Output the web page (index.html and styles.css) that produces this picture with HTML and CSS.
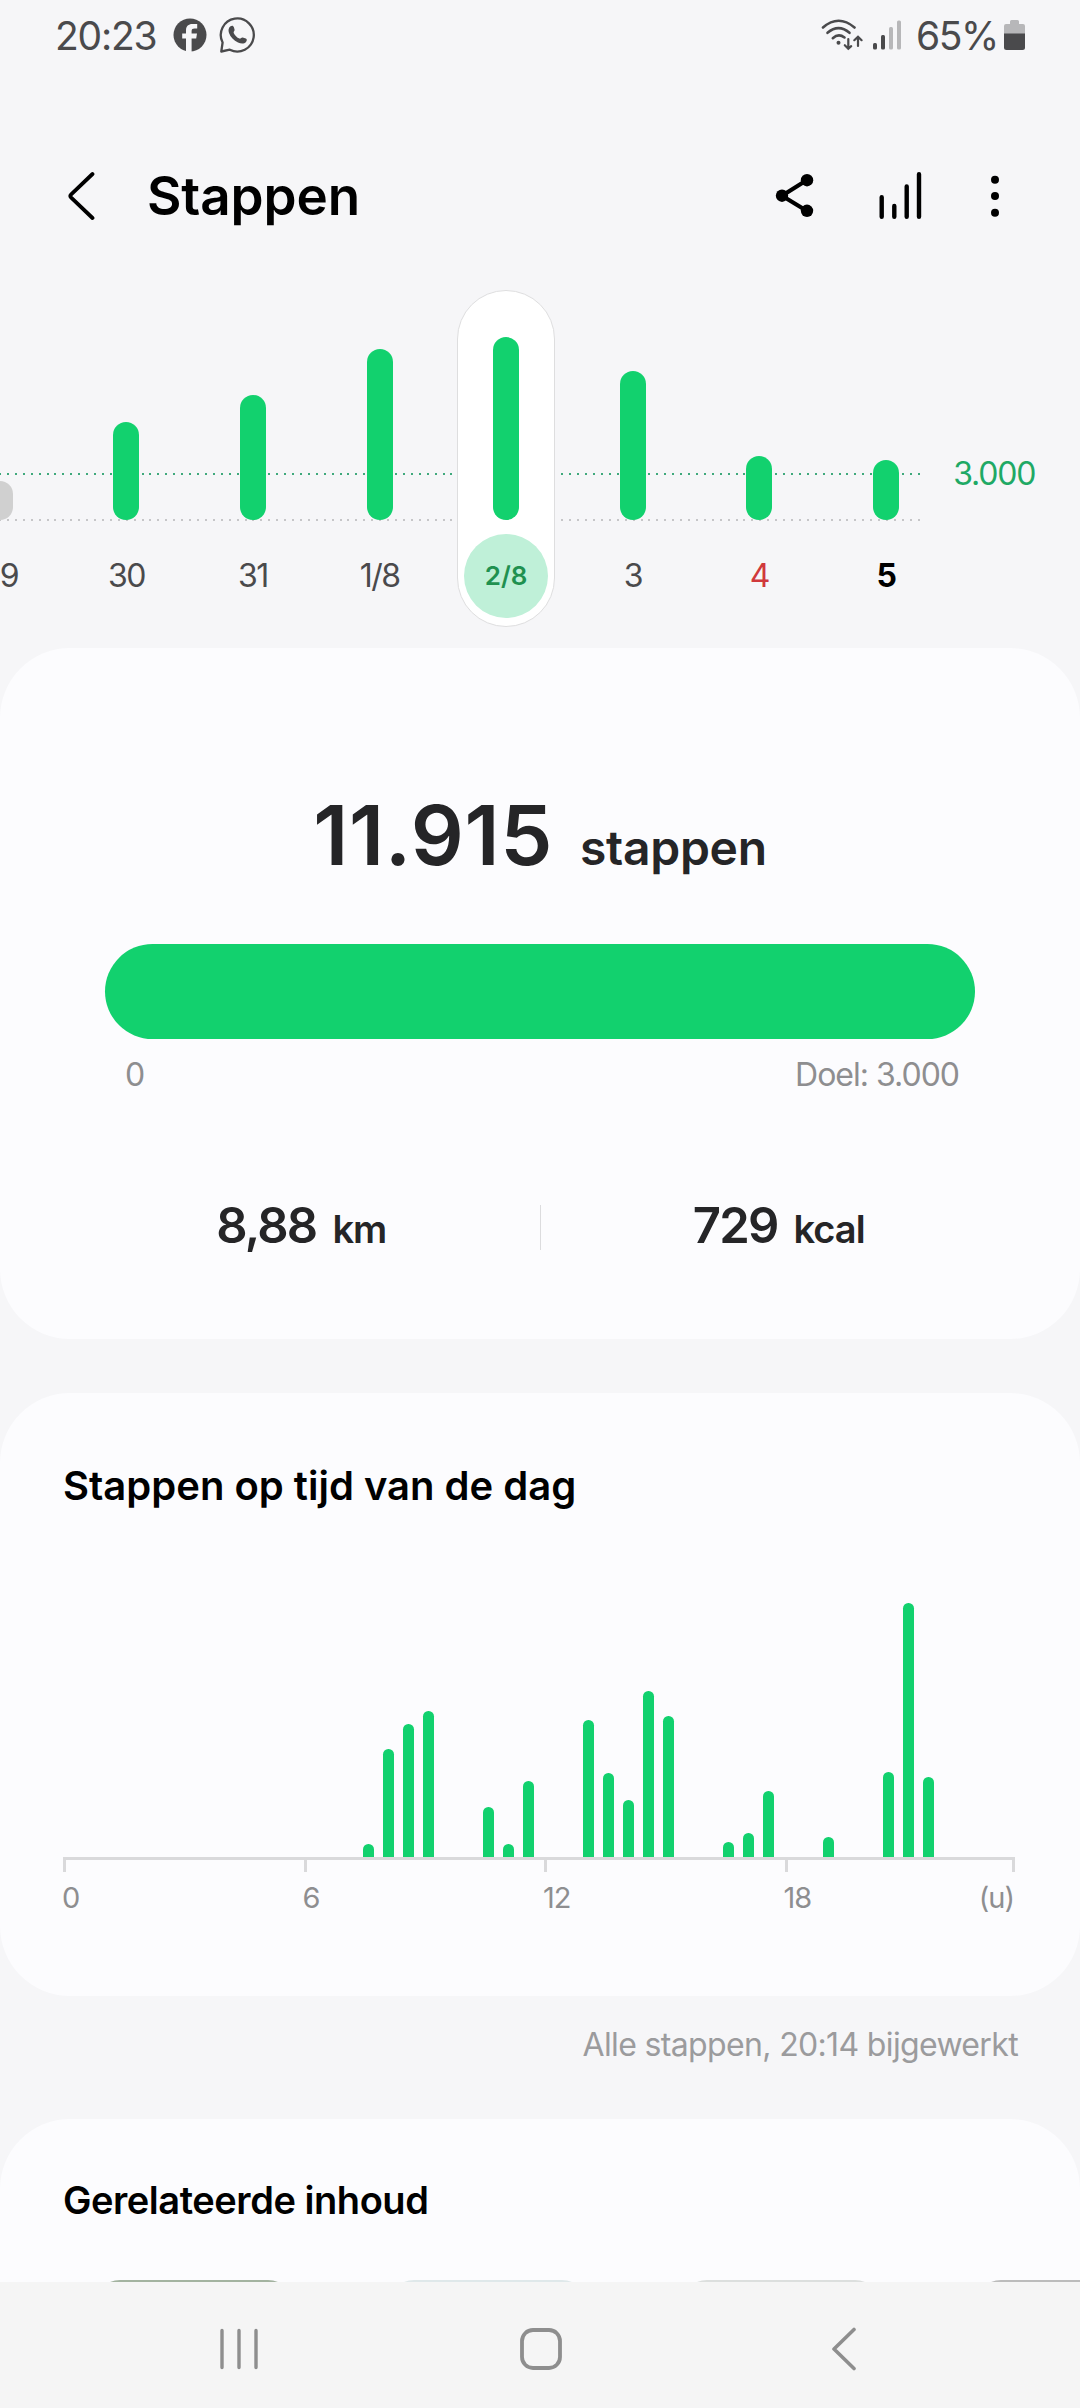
FILE: index.html
```html
<!DOCTYPE html>
<html lang="nl">
<head>
  <meta charset="utf-8">
  <title>Stappen</title>
  <link rel="stylesheet" href="styles.css">
</head>
<body>
  <div class="status-bar">
    <span class="clock">20:23</span>
    <svg class="fb-icon" width="34" height="34" viewBox="0 0 34 34">
      <circle cx="17" cy="17" r="16.5" fill="#4a4a4c"/>
      <path d="M13 34V20.5H9.2v-5H13v-3.2c0-4.2 2.600-6.300 6.300-6.300h4.900v4.400h-2.700c-2 0-2.900.8-2.900 2.500v2.600h5.400l-.8 5h-4.600V34z" fill="#f6f6f8"/>
    </svg>
    <svg class="wa-icon" width="38" height="38" viewBox="0 0 38 38" fill="none">
      <path d="M2.300 35.500L3.600 26.500A16.500 16.500 0 1 1 10.800 33.700Z" stroke="#4a4a4c" stroke-width="2.300" stroke-linejoin="round"/>
      <path d="M11.500 10.300c1.500-1.200 2.900-.7 3.400 1l.7 2.500c.3 1.200-1.400 2-.9 3.100 1.200 2.500 3.200 4.500 5.800 5.700 1.100.5 2-1.500 3.200-1.100l3.100 1.100c1.300.6 1.300 2 .2 3.300-1.900 2.200-5 1.900-8 .5-4.200-2-7.500-5.300-9-9.400-.9-2.600-.6-5.200 1.500-6.700z" fill="#4a4a4c"/>
    </svg>
    <div class="status-right">
      <svg class="wifi-icon" width="44" height="36" viewBox="0 0 44 36" fill="none" stroke="#4a4a4c" stroke-width="2.600" stroke-linecap="round">
        <path d="M3 10.500Q18.500-3 34.500 10.500"/>
        <path d="M7.500 15.800Q18.500 6.600 29.500 15.800"/>
        <path d="M12.800 21.200Q18.500 16 24.500 20.500"/>
        <circle cx="18.500" cy="25.800" r="2" fill="#4a4a4c" stroke="none"/>
        <path d="M28.300 22V31.500M24.800 28.200L28.300 31.700L31.200 29.200" stroke-width="2.200"/>
        <path d="M38 29V20M34.300 23.200L38 19.700L41.600 23.200" stroke-width="2.200"/>
      </svg>
      <svg class="signal-icon" width="28" height="30" viewBox="0 0 28 30">
        <rect x="0" y="23" width="4" height="6.500" rx="1.500" fill="#4a4a4c"/>
        <rect x="8" y="15" width="4" height="14.500" rx="1.500" fill="#4a4a4c"/>
        <rect x="16" y="7" width="4" height="22.500" rx="1.500" fill="#b7b7b9"/>
        <rect x="24" y="0.500" width="4" height="29" rx="1.500" fill="#b7b7b9"/>
      </svg>
      <span class="battery-text">65%</span>
      <svg class="battery-icon" width="21" height="30" viewBox="0 0 21 30">
        <path d="M6 4V1.500Q6 0 7.500 0H13.500Q15 0 15 1.500V4H19Q21 4 21 6V14H0V6Q0 4 2 4Z" fill="#b7b7b9"/>
        <path d="M0 13.500H21V27.500Q21 30 18.500 30H2.500Q0 30 0 27.500Z" fill="#4a4a4c"/>
      </svg>
    </div>
  </div>

  <div class="header">
    <svg class="back-icon" width="30" height="52" viewBox="0 0 30 52" fill="none" stroke="#000" stroke-width="3.800" stroke-linecap="round" stroke-linejoin="round">
      <path d="M25.500 4L4.200 24.300Q2.500 26 4.200 27.700L25.500 48"/>
    </svg>
    <h1>Stappen</h1>
    <div class="header-actions">
      <svg class="share-icon" width="40" height="46" viewBox="0 0 40 46">
        <path d="M32 7L7 22.700L32 38" fill="none" stroke="#000" stroke-width="4.200"/>
        <circle cx="7" cy="22.700" r="6.200"/>
        <circle cx="32" cy="7.200" r="6.200"/>
        <circle cx="32" cy="37.800" r="6.200"/>
      </svg>
      <svg class="chart-icon" width="43" height="48" viewBox="0 0 43 48" fill="none" stroke="#000" stroke-width="4.400" stroke-linecap="round">
        <path d="M2.700 25.200V44.800M15.300 34V44.800M27.700 14.500V44.800M40 2.300V44.800"/>
      </svg>
      <svg class="more-icon" width="10" height="44" viewBox="0 0 10 44">
        <circle cx="5" cy="5.700" r="4"/>
        <circle cx="5" cy="22" r="4"/>
        <circle cx="5" cy="38.700" r="4"/>
      </svg>
    </div>
  </div>

  <div class="week">
    <div class="days">
      <div class="day"><div class="bar missed" style="height: 39px"></div><div class="date">29</div></div>
      <div class="day"><div class="bar" style="height: 98px"></div><div class="date">30</div></div>
      <div class="day"><div class="bar" style="height: 125px"></div><div class="date">31</div></div>
      <div class="day"><div class="bar" style="height: 171px"></div><div class="date">1/8</div></div>
      <div class="day selected"><div class="bar" style="height: 183px"></div><div class="date">2/8</div></div>
      <div class="day"><div class="bar" style="height: 149px"></div><div class="date">3</div></div>
      <div class="day sunday"><div class="bar" style="height: 64px"></div><div class="date">4</div></div>
      <div class="day today"><div class="bar" style="height: 60px"></div><div class="date">5</div></div>
    </div>
    <div class="goal-label">3.000</div>
  </div>

  <div class="card summary">
    <div class="total">
      <span class="total-value">11.915</span>
      <span class="total-unit">stappen</span>
    </div>
    <div class="progress"></div>
    <div class="progress-labels">
      <span>0</span>
      <span>Doel: 3.000</span>
    </div>
    <div class="metrics">
      <div class="metric"><span class="metric-value">8,88</span><span class="metric-unit">km</span></div>
      <div class="divider"></div>
      <div class="metric"><span class="metric-value">729</span><span class="metric-unit">kcal</span></div>
    </div>
  </div>

  <div class="card hours">
    <h2>Stappen op tijd van de dag</h2>
    <!-- One column per half hour -->
    <div class="hour-chart">
      <div class="hour-bar" style="grid-column: 16; height: 13px"></div>
      <div class="hour-bar" style="grid-column: 17; height: 108px"></div>
      <div class="hour-bar" style="grid-column: 18; height: 133px"></div>
      <div class="hour-bar" style="grid-column: 19; height: 146px"></div>
      <div class="hour-bar" style="grid-column: 22; height: 50px"></div>
      <div class="hour-bar" style="grid-column: 23; height: 13px"></div>
      <div class="hour-bar" style="grid-column: 24; height: 76px"></div>
      <div class="hour-bar" style="grid-column: 27; height: 137px"></div>
      <div class="hour-bar" style="grid-column: 28; height: 84px"></div>
      <div class="hour-bar" style="grid-column: 29; height: 57px"></div>
      <div class="hour-bar" style="grid-column: 30; height: 166px"></div>
      <div class="hour-bar" style="grid-column: 31; height: 141px"></div>
      <div class="hour-bar" style="grid-column: 34; height: 15px"></div>
      <div class="hour-bar" style="grid-column: 35; height: 24px"></div>
      <div class="hour-bar" style="grid-column: 36; height: 66px"></div>
      <div class="hour-bar" style="grid-column: 39; height: 20px"></div>
      <div class="hour-bar" style="grid-column: 42; height: 85px"></div>
      <div class="hour-bar" style="grid-column: 43; height: 254px"></div>
      <div class="hour-bar" style="grid-column: 44; height: 80px"></div>
    </div>
    <div class="axis"><i></i><i></i><i></i><i></i></div>
    <div class="axis-labels">
      <span>0</span>
      <span>6</span>
      <span>12</span>
      <span>18</span>
      <span class="axis-unit">(u)</span>
    </div>
  </div>

  <div class="updated">Alle stappen, 20:14 bijgewerkt</div>

  <div class="card related">
    <h2>Gerelateerde inhoud</h2>
    <div class="thumbs">
      <div class="thumb park"></div>
      <div class="thumb sky"></div>
      <div class="thumb light"></div>
      <div class="thumb grey"></div>
    </div>
  </div>

  <div class="nav-bar">
    <svg width="38" height="42" viewBox="0 0 38 42" fill="none" stroke="#8e8e8e" stroke-width="3.400" stroke-linecap="round">
      <path d="M2 2.500V39.500M19 2.500V39.500M36 2.500V39.500"/>
    </svg>
    <svg class="home-icon" width="42" height="42" viewBox="0 0 42 42" fill="none" stroke="#8e8e8e" stroke-width="3.800">
      <rect x="2" y="2" width="38" height="38" rx="11"/>
    </svg>
    <svg width="26" height="44" viewBox="0 0 26 44" fill="none" stroke="#8e8e8e" stroke-width="3.600" stroke-linecap="round" stroke-linejoin="round">
      <path d="M23 2.500L3 22L23 41.500"/>
    </svg>
  </div>
</body>
</html>
```
FILE: styles.css
```css
* {
  box-sizing: border-box;
}

body {
  margin: 0;
  width: 1080px;
  height: 2408px;
  display: flex;
  flex-direction: column;
  overflow: hidden;
  background-color: #f6f6f8;
  font-family: Inter, "Noto Sans", sans-serif;
  color: #000;
}

svg {
  display: block;
  flex: none;
}

h1, h2 {
  margin: 0;
  font-weight: 600;
}

/* Status bar */
.status-bar {
  display: flex;
  align-items: center;
  flex: none;
  height: 70px;
  padding: 0 55px;
  font-size: 39px;
  color: #4a4a4c;
}

.clock {
  width: 118px;
  letter-spacing: -1.2px;
}

.wa-icon {
  margin-left: 12px;
}

.status-right {
  display: flex;
  align-items: center;
  margin-left: auto;
}

.wifi-icon {
  margin-right: 9px;
}

.signal-icon {
  margin-right: 15px;
}

.battery-text {
  width: 88px;
  letter-spacing: -1.5px;
}

/* Header */
.header {
  display: flex;
  align-items: center;
  flex: none;
  height: 220px;
  padding: 32px 80px 0 67px;
}

.header h1 {
  margin-left: 50px;
  font-size: 53px;
  letter-spacing: -0.1px;
}

.header-actions {
  display: flex;
  align-items: center;
  margin-left: auto;
}

.chart-icon {
  margin: 0 68px 0 64px;
}

/* Daily overview */
.week {
  position: relative;
  display: flex;
  flex: none;
  height: 358px;
  overflow: hidden;
}

.week::before,
.week::after {
  content: "";
  position: absolute;
  left: -1px;
  width: 926px;
  height: 2px;
}

.week::before {
  top: 183px;
  background: repeating-linear-gradient(90deg, #3fa97c 0 2px, transparent 2px 7.920px);
}

.week::after {
  top: 229px;
  background: repeating-linear-gradient(90deg, #c6c6c8 0 2px, transparent 2px 7.920px);
}

.days {
  position: relative;
  z-index: 1;
  display: grid;
  grid-template-columns: repeat(8, 126.600px);
  margin-left: -63.500px;
  height: 337px;
}

.day {
  display: flex;
  flex-direction: column;
  align-items: center;
  justify-content: flex-end;
  padding-bottom: 9px;
}

.bar {
  width: 26px;
  border-radius: 13px;
  background-color: #12d16e;
}

.bar.missed {
  background-color: #d0d0d0;
}

.date {
  width: 84px;
  height: 84px;
  margin-top: 14px;
  line-height: 83px;
  text-align: center;
  font-size: 32px;
  letter-spacing: -1.500px;
  color: #4a4a4c;
}

.selected {
  width: 98px;
  justify-self: center;
  padding-bottom: 8px;
  border: 1px solid #dededf;
  border-radius: 49px;
  background-color: #fff;
}

.selected .date {
  border-radius: 50%;
  background-color: #bff0d8;
  color: #1f9150;
  font-size: 26px;
  font-weight: 600;
  letter-spacing: 0;
}

.sunday .date {
  color: #d0393c;
}

.today .date {
  color: #000;
  font-weight: 700;
}

.goal-label {
  margin-left: 4px;
  padding-top: 164px;
  line-height: 40px;
  font-size: 32px;
  letter-spacing: -1.200px;
  color: #1fa965;
}

/* Cards */
.card {
  flex: none;
  border-radius: 70px;
  background-color: #fcfcfe;
}

.card h2 {
  font-size: 40px;
  line-height: 50px;
}

.summary {
  height: 691px;
  padding-top: 137px;
  color: #252527;
}

.total {
  display: flex;
  justify-content: center;
  align-items: baseline;
  font-weight: 600;
}

.total-value {
  font-size: 83px;
  line-height: 100px;
  letter-spacing: 0.600px;
}

.total-unit {
  margin-left: 27px;
  font-size: 48px;
  line-height: 50px;
  letter-spacing: -0.300px;
}

.progress {
  height: 95px;
  margin: 59px 105px 0;
  border-radius: 48px;
  background-color: #12d16e;
}

.progress-labels {
  display: flex;
  justify-content: space-between;
  margin: 16px 121px 0 125px;
  line-height: 40px;
  font-size: 32px;
  letter-spacing: -1px;
  color: #8e8e90;
}

.metrics {
  display: grid;
  grid-template-columns: 1fr 1px 1fr;
  height: 42px;
  margin: 110px 63px 0;
}

.metric {
  display: flex;
  justify-content: center;
  align-items: baseline;
  font-weight: 600;
}

.metric-value {
  font-size: 49px;
  line-height: 42px;
  letter-spacing: -1.800px;
}

.metric-unit {
  margin-left: 16px;
  font-size: 38px;
  line-height: 42px;
  letter-spacing: -1px;
}

.divider {
  background-color: #dcdcde;
}

/* Steps by time of day */
.hours {
  height: 603px;
  margin-top: 54px;
  padding: 68px 63px 0;
}

.hour-chart {
  display: grid;
  grid-template-columns: repeat(48, 20.030px);
  align-items: end;
  justify-items: center;
  height: 346px;
  margin-left: -5px;
}

.hour-bar {
  grid-row: 1;
  width: 10.600px;
  border-radius: 5.300px 5.300px 0 0;
  background-color: #12d16e;
}

.axis {
  display: grid;
  grid-template-columns: repeat(3, 240.500px) 1fr;
  width: 952px;
  height: 15px;
  border-top: 3px solid #d9d9db;
  border-right: 3px solid #d9d9db;
}

.axis i {
  border-left: 3px solid #d9d9db;
}

.axis-labels {
  display: grid;
  grid-template-columns: repeat(3, 240.500px) 1fr auto;
  margin: 6px 0 0 -1px;
  width: 952px;
  line-height: 40px;
  font-size: 29px;
  letter-spacing: -1px;
  color: #8e8e90;
}

.updated {
  flex: none;
  height: 123px;
  padding: 24px 62px 0 0;
  line-height: 50px;
  text-align: right;
  font-size: 32px;
  letter-spacing: -0.650px;
  color: #9b9b9d;
}

/* Related content, cut off by the navigation bar */
.related {
  height: 163px;
  padding: 56px 0 0 63px;
  border-radius: 70px 70px 0 0;
  overflow: hidden;
}

.related h2 {
  font-size: 38px;
  letter-spacing: -0.450px;
}

.thumbs {
  display: flex;
  gap: 93.500px;
  margin: 55px 0 0 31px;
}

.thumb {
  flex: none;
  width: 200px;
  height: 200px;
  border-radius: 26px;
}

.thumb.park {
  background-color: #a3b3a0;
}

.thumb.sky {
  background-color: #dfe8ea;
}

.thumb.light {
  background-color: #dcdfde;
}

.thumb.grey {
  background-color: #bcbcbc;
}

/* System navigation */
.nav-bar {
  display: flex;
  align-items: center;
  justify-content: space-between;
  flex: none;
  height: 126px;
  padding: 8px 223px 0 220px;
  background-color: #f5f5f5;
}

.home-icon {
  margin-right: 8px;
}
```
